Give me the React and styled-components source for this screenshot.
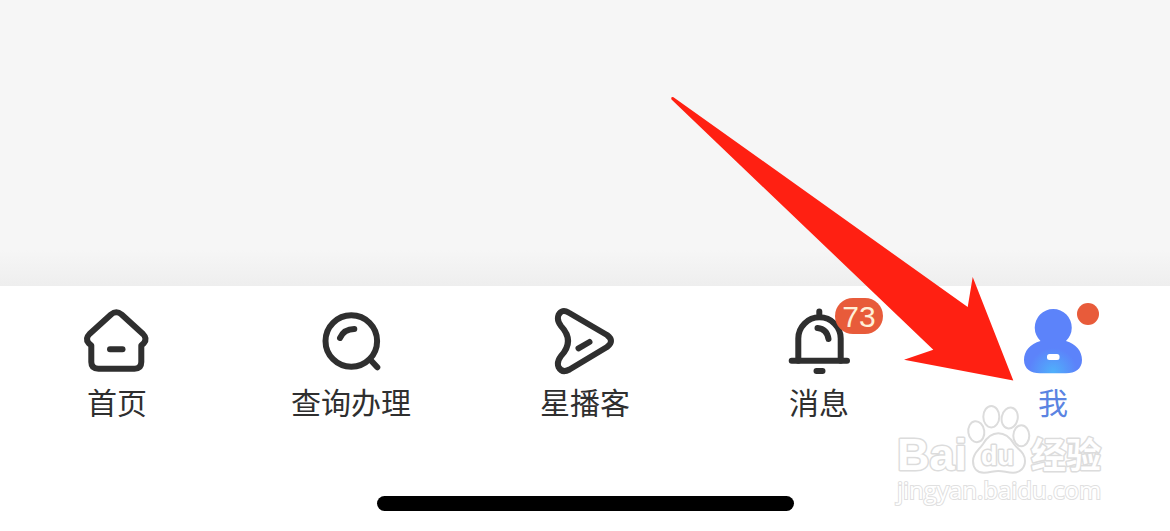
import React from 'react'
import styled, { createGlobalStyle } from 'styled-components'

const ink = '#2f2f2f'
const blue = '#5b84e2'
const red = '#e85b3a'

const GlobalStyle = createGlobalStyle`
    * {
        box-sizing: border-box;
    }
    body {
        margin: 0;
        background-color: #f6f6f6;
        font-family: "Noto Sans CJK SC", "Liberation Sans", sans-serif;
    }
`

const Page = styled.div`
    position: relative;
    display: flex;
    flex-direction: column;
    min-height: 100vh;
    overflow: hidden;
`

const Content = styled.main`
    flex: 1;
    background: linear-gradient(to top, #eeeeee, #f6f6f6 36px);
`

const Bottom = styled.footer`
    background-color: #fff;
    padding: 19px 0 20px;
`

const TabBar = styled.nav`
    display: grid;
    grid-template-columns: repeat(5, 1fr);
    margin-bottom: 78px;
`

const Tab = styled.button`
    display: flex;
    flex-direction: column;
    align-items: center;
    gap: 7px;
    padding: 0;
    border: 0;
    background: none;
    font-family: inherit;
    font-size: 30px;
    line-height: 34px;
    color: ${props => (props.$active ? blue : ink)};
    cursor: pointer;
`

const IconBox = styled.span`
    position: relative;
    display: block;
    width: 72px;
    height: 72px;
`

const Icon = styled.svg`
    display: block;
    width: 72px;
    height: 72px;
    fill: none;
    stroke: ${ink};
    stroke-width: 6;
    stroke-linecap: round;
    stroke-linejoin: round;
`

const Badge = styled.span`
    position: absolute;
    top: -7px;
    left: 52px;
    width: 48px;
    height: 36px;
    border-radius: 18px;
    background-color: ${red};
    color: #fff0d8;
    font-family: "Liberation Sans", sans-serif;
    font-size: 30px;
    line-height: 37px;
    text-align: center;
`

const Dot = styled.span`
    position: absolute;
    top: -2px;
    left: 60px;
    width: 22px;
    height: 22px;
    border-radius: 50%;
    background-color: ${red};
`

const HomeIndicator = styled.div`
    width: 417px;
    max-width: 60%;
    height: 15px;
    margin: 0 auto;
    border-radius: 8px;
    background-color: #000;
`

const Arrow = styled.svg`
    position: absolute;
    right: 156px;
    bottom: 150px;
    width: 344px;
    height: 285px;
    fill: #ff2012;
    pointer-events: none;
`

const Watermark = styled.div`
    position: absolute;
    right: 61px;
    bottom: 31px;
    width: 216px;
    pointer-events: none;
`

const Logo = styled.svg`
    display: block;
    width: 216px;
    height: 80px;
    overflow: visible;
    fill: #fff;
    stroke: #dcdcdc;
    stroke-width: 2;
    stroke-linejoin: round;
    font-family: "Liberation Sans", "Noto Sans CJK SC", sans-serif;
    font-weight: bold;

    text {
        paint-order: stroke;
        stroke-width: 3;
    }
`

const Site = styled.div`
    padding-left: 4px;
    font-family: "Open Sans", sans-serif;
    font-size: 24px;
    line-height: 20px;
    color: #fff;
    -webkit-text-stroke: 2px #e0e0e0;
    paint-order: stroke;
`

function HomeIcon() {
    return (
        <Icon viewBox="0 0 72 72" aria-hidden="true">
            <path d="M30 9.5Q35.3 5 40.6 9.5L62 29Q66.5 33.5 63 38L60.3 40.5V57Q60.3 63.7 53.5 63.7H17.5Q10.3 63.7 10.3 57V40.5L7.5 38Q4 33.5 8.5 29Z" />
            <path d="M29 44.3H41.5" />
        </Icon>
    )
}

function SearchIcon() {
    return (
        <Icon viewBox="0 0 72 72" aria-hidden="true">
            <circle cx="36.3" cy="36" r="25.8" />
            <path d="M56 55.5L62.3 62.3M25 33Q29 24 39.3 24" />
        </Icon>
    )
}

function PlayIcon() {
    return (
        <Icon viewBox="0 0 72 72" aria-hidden="true">
            <path d="M19.5 7.5L58 30Q66 36 58 42L20.5 64.5Q13 68.5 9.5 62Q7.500 57 12 51Q26 36 12 21Q7.5 15 9.500 10Q13 3.500 19.500 7.500Z" />
            <path d="M29.5 43.3L40.5 37" />
        </Icon>
    )
}

function BellIcon() {
    return (
        <Icon viewBox="0 0 72 72" aria-hidden="true">
            <path d="M15.3 55.7V33.5a21.2 21.2 0 0 1 42.4 0V55.7" />
            <path d="M8.7 55.7H64M33.5 66H39.5M34.5 23Q44 24 45.5 34M36.3 6.5V9" />
        </Icon>
    )
}

function MeIcon() {
    return (
        <Icon viewBox="0 0 72 72" aria-hidden="true">
            <defs>
                <radialGradient id="body" gradientUnits="userSpaceOnUse" cx="36" cy="67" r="24">
                    <stop offset="0" stopColor="#4fb0fb" />
                    <stop offset="1" stopColor="#5c83fa" />
                </radialGradient>
            </defs>
            <g stroke="none">
                <path
                    fill="url(#body)"
                    d="M23.5 36A18.5 18.5 0 1 1 49 36C59 39 65 46 65 55C65 64 58 68.3 49 68.3H23C14 68.3 7 64 7 55C7 46 13 39 23.5 36Z"
                />
                <rect x="30" y="49" width="12.5" height="6" rx="2.5" fill="#fff" />
            </g>
        </Icon>
    )
}

const tabs = [
    { label: '首页', icon: <HomeIcon /> },
    { label: '查询办理', icon: <SearchIcon /> },
    { label: '星播客', icon: <PlayIcon /> },
    { label: '消息', icon: <BellIcon />, mark: <Badge>73</Badge> },
    { label: '我', icon: <MeIcon />, mark: <Dot />, active: true },
]

function App() {
    return (
        <>
            <GlobalStyle />
            <Page>
                <Content />
                <Bottom>
                    <TabBar>
                        {tabs.map(tab => (
                            <Tab key={tab.label} type="button" $active={tab.active}>
                                <IconBox>
                                    {tab.icon}
                                    {tab.mark}
                                </IconBox>
                                <span>{tab.label}</span>
                            </Tab>
                        ))}
                    </TabBar>
                    <HomeIndicator />
                </Bottom>

                <Arrow viewBox="670 96 344 285" aria-hidden="true">
                    <path d="M673.5 97.2L967.7 307L972.7 277L1013.3 380.5L904 359.7L933.3 349.7L671.5 99.5Q670.5 96.5 673.5 97.2Z" />
                </Arrow>

                <Watermark>
                    <Logo viewBox="0 0 216 80">
                        <text x="4" y="70" fontSize="45">Bai</text>
                        <ellipse cx="83.3" cy="31.7" rx="8" ry="10.5" transform="rotate(-8 83.3 31.7)" />
                        <ellipse cx="98.3" cy="16.7" rx="8" ry="10.7" />
                        <ellipse cx="116.7" cy="18" rx="8" ry="10.5" transform="rotate(12 116.7 18)" />
                        <ellipse cx="128.3" cy="35.7" rx="8" ry="10.5" />
                        <path d="M105.3 33.3C113 33.3 118 39 121 44C125 50 132 52 132 61C132 68 127 72.7 120 72.7C114 72.7 111 71 105.3 71C100 71 97 72.7 91 72.7C84 72.7 80 68 80 61C80 53 86 50 90 44C93 39 98 33.3 105.3 33.3Z" />
                        <text x="88" y="65" fontSize="27">du</text>
                        <text x="138" y="68" fontSize="35">经验</text>
                    </Logo>
                    <Site>jingyan.baidu.com</Site>
                </Watermark>
            </Page>
        </>
    )
}

export default App
